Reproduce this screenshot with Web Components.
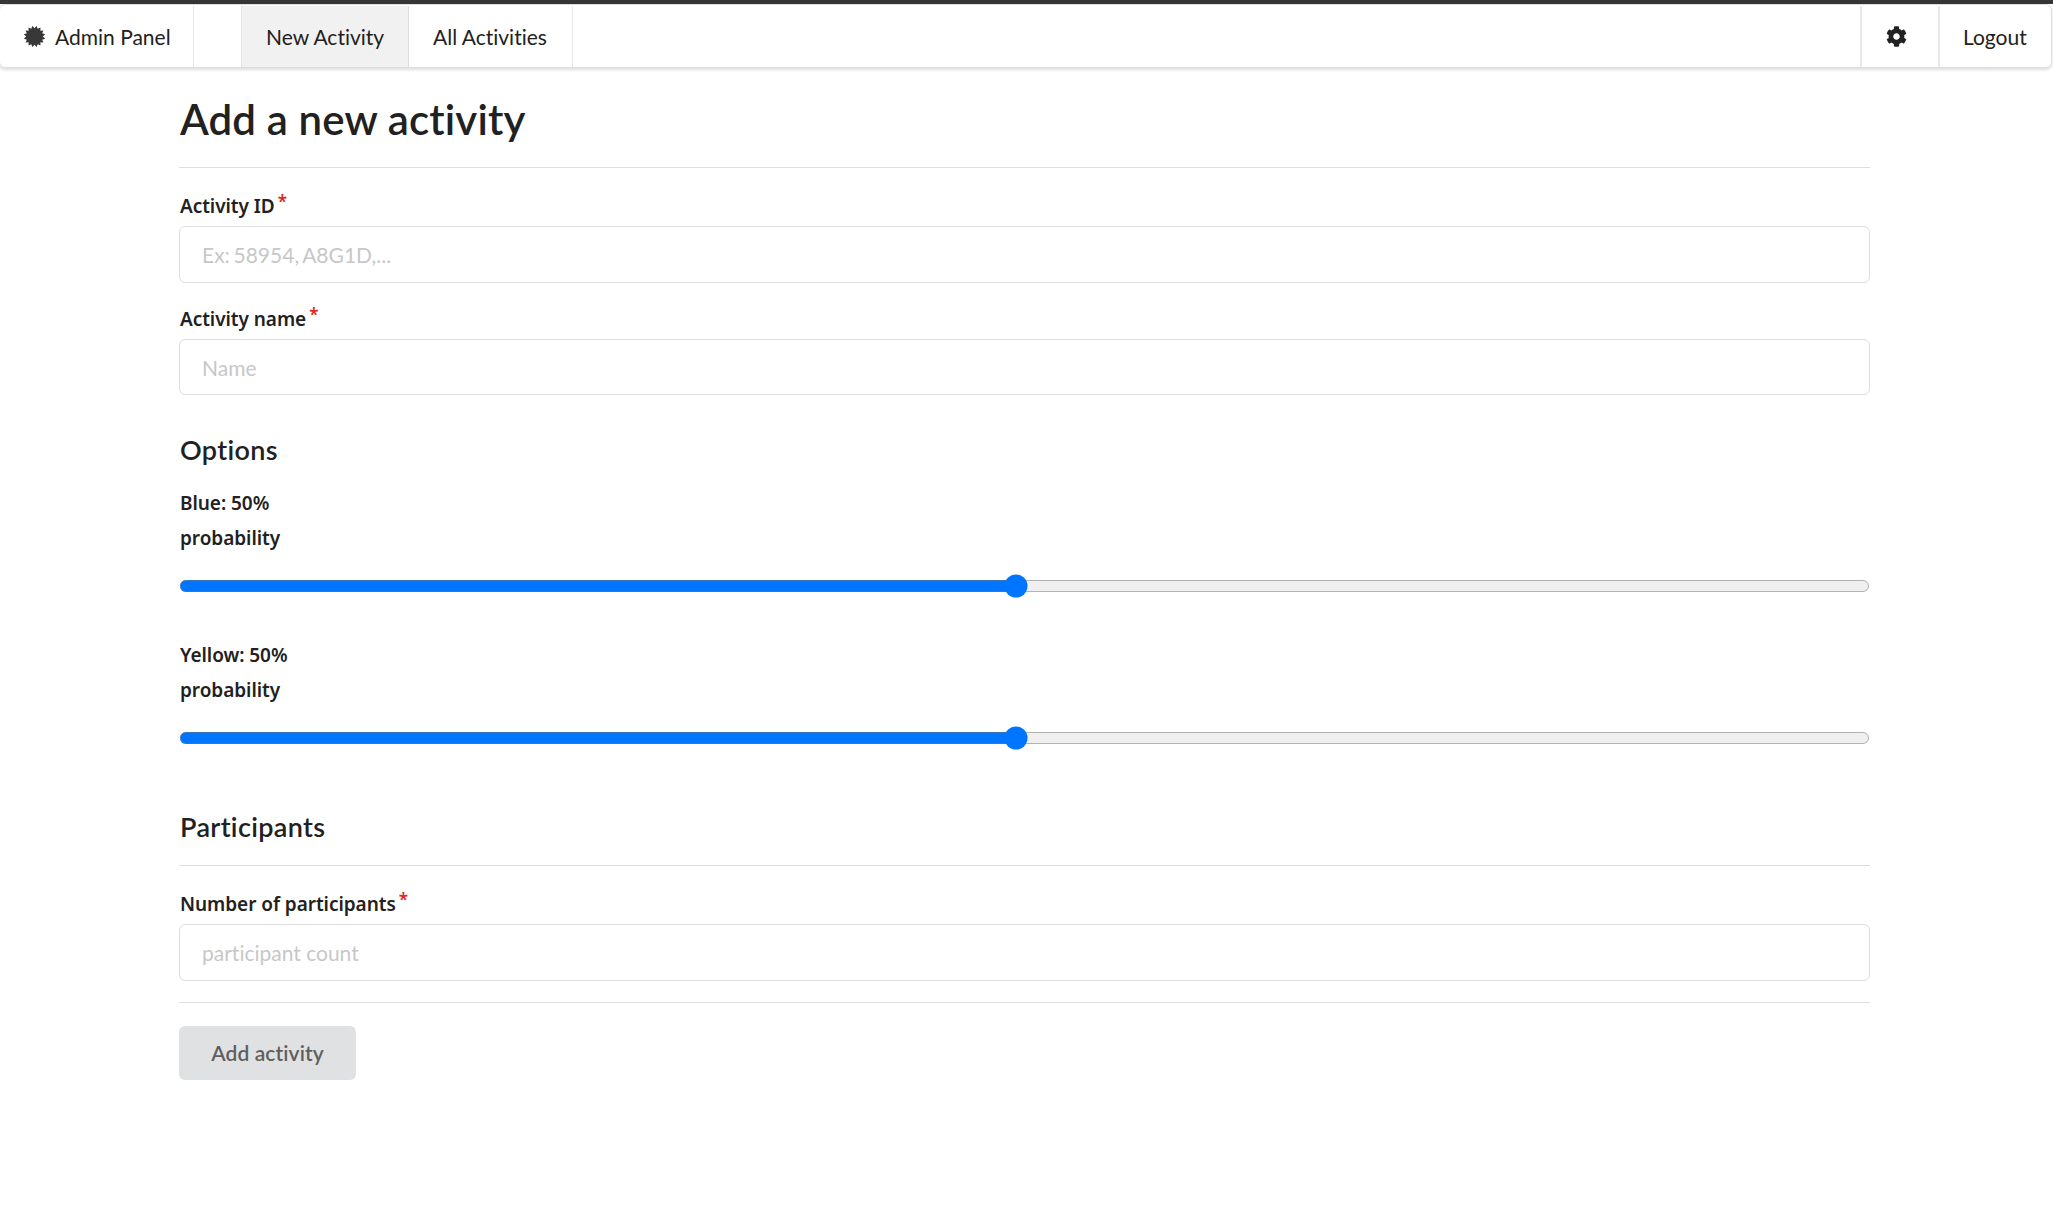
<!DOCTYPE html>
<html lang="en">
<head>
<meta charset="utf-8">
<title>Admin Panel</title>
<style>
html,body{margin:0;background:#fff}
body{font:21px/30px Lato,"Liberation Sans",sans-serif;font-variant-ligatures:none;color:#212121;border-top:4px solid #353535;box-sizing:border-box;height:1230px;overflow:hidden}
</style>
</head>
<body>
<admin-nav></admin-nav>
<activity-form></activity-form>
<script>
const define = (name, html, setup) => customElements.define(name, class extends HTMLElement {
  constructor() {
    super();
    this.attachShadow({mode: 'open'}).innerHTML = html;
  }
  connectedCallback() { if (setup) setup(this, this.shadowRoot); }
});

define('burst-icon', `<style>:host{display:block;width:21px;height:21px}svg{display:block}</style>
<svg width="21" height="21" viewBox="-10.5 -10.5 21 21"><polygon fill="#383838"/></svg>`, (el, root) => {
  const teeth = 16, pts = [];
  for (let i = 0; i < teeth * 2; i++) {
    const r = i % 2 ? 8.3 : 10.8, a = (i + 1) * Math.PI / teeth;
    pts.push((r * Math.sin(a)).toFixed(2) + ',' + (r * Math.cos(a)).toFixed(2));
  }
  root.querySelector('polygon').setAttribute('points', pts.join(' '));
});

define('cog-icon', `<style>:host{display:block;width:21px;height:21px}svg{display:block}</style>
<svg width="21" height="21" viewBox="0 0 512 512"><path fill="#212121" d="M487.4 315.7l-42.6-24.6c4.3-23.2 4.3-47 0-70.2l42.6-24.6c4.9-2.8 7.1-8.6 5.5-14-11.1-35.6-30-67.8-54.7-94.6-3.8-4.1-10-5.1-14.8-2.3L380.8 110c-17.9-15.4-38.5-27.3-60.8-35.1V25.8c0-5.6-3.9-10.5-9.4-11.7-36.7-8.2-74.3-7.8-109.2 0-5.5 1.2-9.4 6.1-9.4 11.7V75c-22.2 7.9-42.8 19.8-60.8 35.1L88.7 85.5c-4.9-2.8-11-1.9-14.8 2.3-24.7 26.7-43.6 58.9-54.7 94.6-1.7 5.4.6 11.2 5.5 14L67.3 221c-4.3 23.2-4.3 47 0 70.2l-42.6 24.6c-4.9 2.8-7.1 8.6-5.5 14 11.1 35.6 30 67.8 54.7 94.6 3.8 4.1 10 5.1 14.8 2.3l42.6-24.6c17.9 15.4 38.5 27.3 60.8 35.1v49.2c0 5.6 3.9 10.5 9.4 11.7 36.7 8.2 74.3 7.8 109.2 0 5.5-1.2 9.4-6.1 9.4-11.7v-49.2c22.2-7.9 42.8-19.8 60.8-35.1l42.6 24.6c4.9 2.8 11 1.9 14.8-2.3 24.7-26.7 43.6-58.9 54.7-94.6 1.5-5.5-.7-11.3-5.6-14.1zM256 336c-44.1 0-80-35.9-80-80s35.9-80 80-80 80 35.9 80 80-35.9 80-80 80z"/></svg>`);

define('nav-item', `<style>
:host{display:flex;align-items:center;box-sizing:border-box;height:61px;padding-left:24px;border-right:1px solid #e8e8e8;white-space:nowrap;color:#212121}
:host([active]){background:#f1f1f1;border-left:1px solid #e3e3e3;border-right-color:#dcdcdc}
:host([end]){border-right:0;border-left:2px solid #e8e8e8}
</style><slot></slot>`);

define('admin-nav', `<style>
:host{display:flex;box-sizing:border-box;height:64px;margin:0 1px 0 -1px;padding-top:1px;border:1px solid #dededf;border-radius:6px;box-shadow:0 2px 3px rgba(34,36,38,.15)}
.space{flex:1}
burst-icon{margin:0 10px 0 0}
.brand{width:194px;padding-left:24px}
.gap{width:47px}
.new{width:168px}.all{width:164px}
.cog{width:78px;padding-left:24px}.cog cog-icon{margin-top:-1px}
.out{width:113px;padding-left:23px}
</style>
<nav-item class="brand"><burst-icon></burst-icon>Admin Panel</nav-item>
<div class="gap"></div>
<nav-item class="new" active>New Activity</nav-item>
<nav-item class="all">All Activities</nav-item>
<div class="space"></div>
<nav-item class="cog" end><cog-icon></cog-icon></nav-item>
<nav-item class="out" end>Logout</nav-item>`);

define('form-label', `<style>
:host{display:flex;align-items:flex-start;height:35px;font:600 19px/35px "Noto Sans","Open Sans",sans-serif;letter-spacing:-.05px;padding-left:1px;white-space:nowrap}
i{display:none;font:600 17px/25px "Noto Sans","Open Sans",sans-serif;color:#db2828;margin-left:3px}
:host([required]) i{display:block}
</style><span><slot></slot></span><i>*</i>`);

define('text-field', `<style>
:host{display:block}
input{display:block;box-sizing:border-box;width:100%;height:var(--h,57px);border:1px solid #dedede;border-radius:6px;padding:0 22px;font:21px Lato,sans-serif;font-variant-ligatures:none;word-spacing:var(--gap,0);color:#212121;outline:0;background:#fff}
input::placeholder{color:#c7c7c7;opacity:1}
form-label{margin-bottom:2px}
</style><form-label required></form-label><input>`, (el, root) => {
  root.querySelector('form-label').textContent = el.getAttribute('label');
  root.querySelector('input').placeholder = el.getAttribute('hint');
});

define('range-field', `<style>
:host{display:block}
input{display:block;zoom:1.5;width:100%;height:16px;margin:0}
form-label+form-label{margin-bottom:18px}
</style><form-label class="a"></form-label><form-label>probability</form-label><input type="range" min="1" max="100" value="50">`, (el, root) => {
  root.querySelector('.a').textContent = el.getAttribute('label') + ': 50%';
});

define('activity-form', `<style>
:host{display:block;width:1691px;margin-left:179px}
h1{margin:0;padding:26px 0 0 1px;height:73px;font-size:42px;line-height:51px;font-weight:600;letter-spacing:.14px}
h2{margin:0;font-size:27px;line-height:34px;font-weight:600;letter-spacing:.35px;padding-left:1px}
hr{margin:0;border:0;height:1px;background:#dedede}
.id{margin-top:21px;--gap:-1.7px}.name{margin-top:19px;--h:56px}
.opt{margin-top:38px}.blue{margin-top:19px}.yellow{margin-top:40px}
.part{margin-top:60px;margin-bottom:21px}
.count{margin-top:21px}.last{margin-top:21px}
button{display:block;margin-top:23px;width:177px;height:54px;border:0;border-radius:6px;background:#e0e1e2;color:#5f5f60;font:600 21px Lato,sans-serif;font-variant-ligatures:none;letter-spacing:.1px;padding:0 0 1px}
</style>
<h1>Add a new activity</h1><hr>
<text-field class="id" label="Activity ID" hint="Ex: 58954, A8G1D,..."></text-field>
<text-field class="name" label="Activity name" hint="Name"></text-field>
<h2 class="opt">Options</h2>
<range-field class="blue" label="Blue"></range-field>
<range-field class="yellow" label="Yellow"></range-field>
<h2 class="part">Participants</h2><hr>
<text-field class="count" label="Number of participants" hint="participant count"></text-field>
<hr class="last">
<button>Add activity</button>`);
</script>
</body>
</html>
